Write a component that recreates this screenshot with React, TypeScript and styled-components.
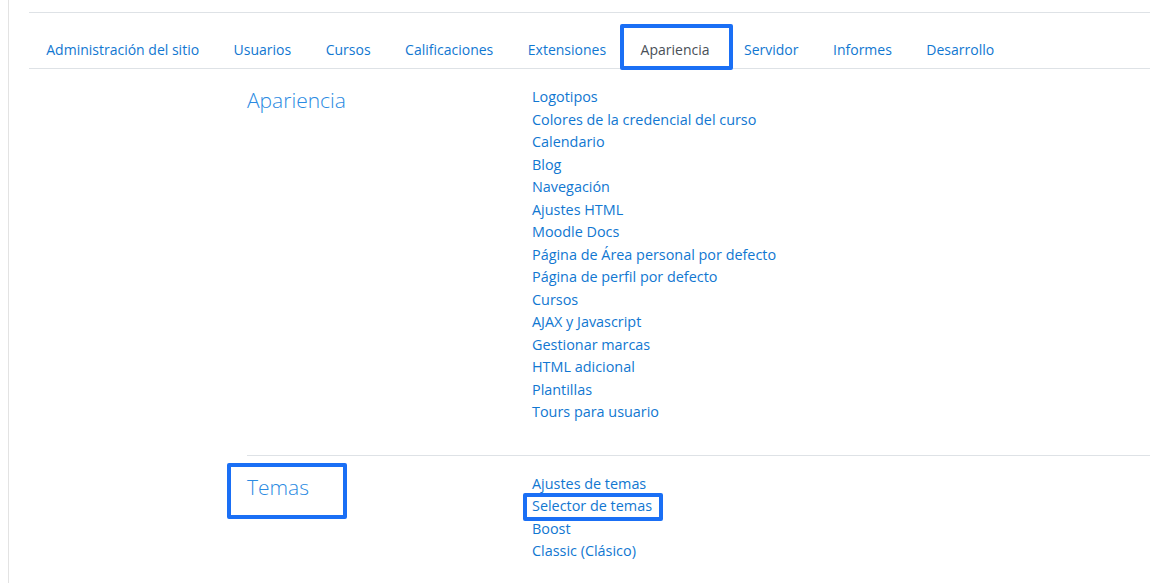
import styled, { createGlobalStyle } from "styled-components";

const GlobalStyle = createGlobalStyle`
  html, body {
    margin: 0;
    padding: 0;
    background: #fff;
  }
  body {
    font-family: "Open Sans", "Liberation Sans", sans-serif;
    font-size: 14.4px;
    color: #1d2125;
  }
`;

const Page = styled.div`
  margin-left: 8px;
  border-left: 1px solid #e3e3e3;
  min-height: 583px;
  padding: 12px 0 0 20px;
  box-sizing: border-box;
`;

const Tabs = styled.nav`
  display: flex;
  border-top: 1px solid #dee2e6;
  border-bottom: 1px solid #dee2e6;
  height: 55px;
  align-items: flex-end;
`;

const Marked = styled.div<{ $inset: string; $top?: boolean }>`
  position: relative;
  align-self: ${(p) => (p.$top ? "start" : "auto")};
  &::after {
    content: "";
    position: absolute;
    inset: ${(p) => p.$inset};
    border: 4px solid #1a6ff5;
    border-radius: 2px;
    pointer-events: none;
  }
`;

const Tab = styled.a<{ $active?: boolean }>`
  display: block;
  padding: 0 17.25px 7px;
  line-height: 22px;
  font-size: 14px;
  color: ${(p) => (p.$active ? "#495057" : "#1177d1")};
  text-decoration: none;
  cursor: pointer;
`;

const Section = styled.section<{ $last?: boolean }>`
  display: grid;
  grid-template-columns: 285px 1fr;
  margin-left: 218px;
  padding: ${(p) => (p.$last ? "17px 0 0" : "17px 0 31px")};
  border-bottom: ${(p) => (p.$last ? "none" : "1px solid #dee2e6")};
`;

const Heading = styled.h2`
  margin: 0;
  font-family: "Open Sans", "Liberation Sans", sans-serif;
  font-weight: 300;
  font-size: 21px;
  line-height: 28px;
  color: #2a8ae2;
`;

const Links = styled.ul`
  list-style: none;
  margin: 0;
  padding: 0;
`;

const LinkItem = styled.li`
  line-height: 22.5px;
`;

const Link = styled.a`
  display: inline-block;
  color: #1177d1;
  text-decoration: none;
  font-size: 14.4px;
  cursor: pointer;
`;

const tabs = [
  "Administración del sitio",
  "Usuarios",
  "Cursos",
  "Calificaciones",
  "Extensiones",
  "Apariencia",
  "Servidor",
  "Informes",
  "Desarrollo",
];

const appearance = [
  "Logotipos",
  "Colores de la credencial del curso",
  "Calendario",
  "Blog",
  "Navegación",
  "Ajustes HTML",
  "Moodle Docs",
  "Página de Área personal por defecto",
  "Página de perfil por defecto",
  "Cursos",
  "AJAX y Javascript",
  "Gestionar marcas",
  "HTML adicional",
  "Plantillas",
  "Tours para usuario",
];

export default function App() {
  return (
    <>
      <GlobalStyle />
      <Page>
        <Tabs>
          {tabs.map((t) =>
            t === "Apariencia" ? (
              <Marked key={t} $inset="-15px -6px -2px -3px">
                <Tab $active>{t}</Tab>
              </Marked>
            ) : (
              <Tab key={t}>{t}</Tab>
            )
          )}
        </Tabs>

        <Section>
          <Heading>Apariencia</Heading>
          <Links>
            {appearance.map((l, i) => (
              <LinkItem key={i}>
                <Link>{l}</Link>
              </LinkItem>
            ))}
          </Links>
        </Section>

        <Section $last>
          <Marked $top $inset="-10px 0 -18px -20px" style={{ width: 100 }}>
            <Heading>Temas</Heading>
          </Marked>
          <Links>
            <LinkItem>
              <Link>Ajustes de temas</Link>
            </LinkItem>
            <LinkItem>
              <Marked $inset="-2px -11px -3px -9px" style={{ display: "inline-block" }}>
                <Link>Selector de temas</Link>
              </Marked>
            </LinkItem>
            <LinkItem>
              <Link>Boost</Link>
            </LinkItem>
            <LinkItem>
              <Link>Classic (Clásico)</Link>
            </LinkItem>
          </Links>
        </Section>
      </Page>
    </>
  );
}
